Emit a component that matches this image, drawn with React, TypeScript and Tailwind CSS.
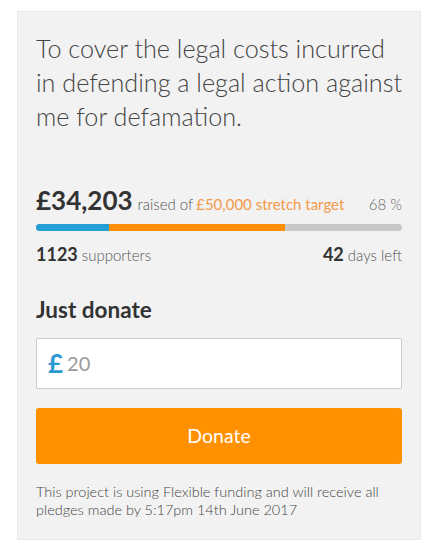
import React from "react";

export default function App() {
  return (
    <div className="w-[434px] h-[557px] bg-white pt-[11px] pl-[17px]" style={{ fontFamily: "Lato, 'Noto Sans', sans-serif" }}>
      <div className="w-[404px] h-[529px] bg-[#f2f2f2] border border-[#e9e9e9] px-[18px] pt-[19px]">
        <h1 className="mr-[-8px] text-[25.2px] leading-[34px] font-light text-[#444]">
          To cover the legal costs incurred in defending a legal action against me for defamation.
        </h1>

        <div className="mt-[52px] flex items-baseline">
          <span className="text-[26px] font-bold text-[#333] leading-[30px]">£34,203</span>
          <span className="ml-[5px] text-[15px] font-light text-[#555]">raised of</span>
          <span className="ml-[3px] text-[15px] text-[#f39a4b]">£50,000 stretch target</span>
          <span className="ml-auto text-[15px] font-light text-[#666]">68 %</span>
        </div>

        <div className="mt-[8px] h-[7px] rounded-full bg-[#c8c8c8] flex overflow-hidden">
          <div className="w-[20%] bg-[#22a0d4]" />
          <div className="w-[48%] bg-[#ff8f00]" />
        </div>

        <div className="mt-[10px] flex items-baseline justify-between">
          <div>
            <span className="text-[18px] font-bold text-[#333]">1123</span>
            <span className="ml-[4px] text-[15px] font-light text-[#555]">supporters</span>
          </div>
          <div>
            <span className="text-[18px] font-bold text-[#333]">42</span>
            <span className="ml-[4px] text-[15px] font-light text-[#555]">days left</span>
          </div>
        </div>

        <h2 className="mt-[28px] text-[22.5px] leading-[28px] font-bold text-[#333]">Just donate</h2>

        <div className="mt-[14px] h-[51px] bg-white border border-[#cccccc] rounded-[2px] flex items-center pl-[11px]">
          <span className="text-[26px] font-bold text-[#2b9ad0] leading-none">£</span>
          <span className="ml-[4px] text-[20px] text-[#999] leading-none">20</span>
        </div>

        <button className="mt-[19px] w-full h-[56px] bg-[#ff9100] rounded-[3px] text-white text-[19.5px] flex items-center justify-center">
          Donate
        </button>

        <p className="mt-[19px] text-[14.5px] leading-[18px] font-light text-[#444]">
          This project is using Flexible funding and will receive all pledges made by 5:17pm 14th June 2017
        </p>
      </div>
    </div>
  );
}
